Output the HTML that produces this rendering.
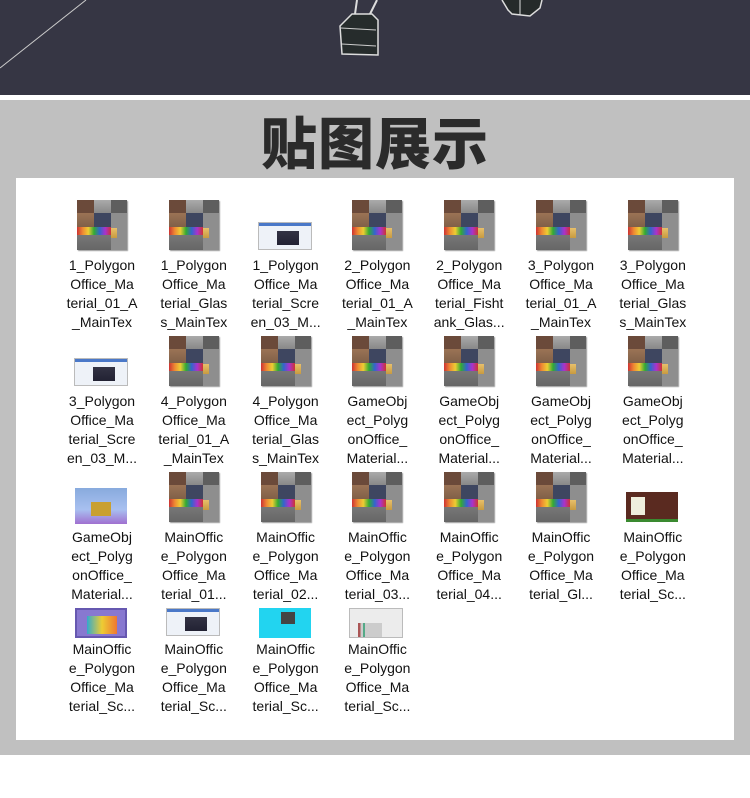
<!DOCTYPE html>
<html><head><meta charset="utf-8"><style>
*{margin:0;padding:0;box-sizing:border-box}
body{width:750px;height:798px;background:#fff;position:relative;overflow:hidden;font-family:"Liberation Sans","Noto Sans CJK SC",sans-serif}
#top{position:absolute;left:0;top:0;width:750px;height:95px;background:#363644}
#gray{position:absolute;left:0;top:100px;width:750px;height:655px;background:#c0c0c0}
h1{position:absolute;left:0;top:105px;width:750px;text-align:center;font-size:56px;font-weight:900;color:#2b2b2b;letter-spacing:1px;line-height:72px;font-family:"Noto Sans CJK SC",sans-serif}
#panel{position:absolute;left:16px;top:178px;width:718px;height:562px;background:#fff}
.it{position:absolute;width:80px;text-align:center;font-size:14px;line-height:19px;color:#111}
.th{position:absolute;left:15px;top:0;width:50px;height:50px}
.tx{background:
linear-gradient(#e8c06a,#c89a40) 34px 28px/6px 10px no-repeat,
linear-gradient(90deg,#c33,#e83,#ec3,#3a3,#36c,#a3c,#c33) 0 27px/34px 8px no-repeat,
linear-gradient(#777,#666) 0 35px/34px 15px no-repeat,
linear-gradient(#6b4a3a,#6b4a3a) 0 0/17px 13px no-repeat,
linear-gradient(#aaa,#888) 17px 0/17px 13px no-repeat,
linear-gradient(#9b7355,#806048) 0 13px/17px 14px no-repeat,
linear-gradient(#3e4660,#3e4660) 17px 13px/17px 14px no-repeat,
linear-gradient(#5e5e5e,#5e5e5e) 34px 0/16px 13px no-repeat,
#8e8e8e;box-shadow:1px 1px 1px #999}
.sc{top:22px;left:12px;width:54px;height:28px;background:
linear-gradient(#334,#223) 18px 8px/22px 14px no-repeat,
linear-gradient(#4a78c8,#4a78c8) 0 0/54px 3px no-repeat,#eef2f8;border:1px solid #bbb}
.tt{position:absolute;left:0;top:56px;width:80px}
</style></head><body>
<div id="top">
<svg width="750" height="95" style="position:absolute;left:0;top:0">
<line x1="0" y1="68" x2="86" y2="0" stroke="#ccc" stroke-width="1"/>
<path d="M357 0 L355 14 M377 0 L370 14" stroke="#ddd" stroke-width="2" fill="none"/>
<path d="M352 14 L372 14 L378 20 L378 55 L342 54 L340 26 Z" fill="#262c2c" stroke="#ddd" stroke-width="1.5"/>
<path d="M341 28 L376 30 M342 44 L376 46" stroke="#ccc"/>
<path d="M502 0 L508 10 L512 14 L530 16 L540 8 L542 0" fill="#252a2a" stroke="#ddd" stroke-width="1.5"/>
<path d="M520 0 L520 15" stroke="#ddd"/>
</svg>
</div>
<div id="gray"></div>
<h1>贴图展示</h1>
<div id="panel"></div>
<div id="items"></div>
<script>
var d=[
["tx","1_Polygon<br>Office_Ma<br>terial_01_A<br>_MainTex"],["tx","1_Polygon<br>Office_Ma<br>terial_Glas<br>s_MainTex"],["sc","1_Polygon<br>Office_Ma<br>terial_Scre<br>en_03_M..."],["tx","2_Polygon<br>Office_Ma<br>terial_01_A<br>_MainTex"],["tx","2_Polygon<br>Office_Ma<br>terial_Fisht<br>ank_Glas..."],["tx","3_Polygon<br>Office_Ma<br>terial_01_A<br>_MainTex"],["tx","3_Polygon<br>Office_Ma<br>terial_Glas<br>s_MainTex"],
["sc","3_Polygon<br>Office_Ma<br>terial_Scre<br>en_03_M..."],["tx","4_Polygon<br>Office_Ma<br>terial_01_A<br>_MainTex"],["tx","4_Polygon<br>Office_Ma<br>terial_Glas<br>s_MainTex"],["tx","GameObj<br>ect_Polyg<br>onOffice_<br>Material..."],["tx","GameObj<br>ect_Polyg<br>onOffice_<br>Material..."],["tx","GameObj<br>ect_Polyg<br>onOffice_<br>Material..."],["tx","GameObj<br>ect_Polyg<br>onOffice_<br>Material..."],
["g1","GameObj<br>ect_Polyg<br>onOffice_<br>Material..."],["tx","MainOffic<br>e_Polygon<br>Office_Ma<br>terial_01..."],["tx","MainOffic<br>e_Polygon<br>Office_Ma<br>terial_02..."],["tx","MainOffic<br>e_Polygon<br>Office_Ma<br>terial_03..."],["tx","MainOffic<br>e_Polygon<br>Office_Ma<br>terial_04..."],["tx","MainOffic<br>e_Polygon<br>Office_Ma<br>terial_Gl..."],["g2","MainOffic<br>e_Polygon<br>Office_Ma<br>terial_Sc..."],
["g3","MainOffic<br>e_Polygon<br>Office_Ma<br>terial_Sc..."],["sc4","MainOffic<br>e_Polygon<br>Office_Ma<br>terial_Sc..."],["g4","MainOffic<br>e_Polygon<br>Office_Ma<br>terial_Sc..."],["g5","MainOffic<br>e_Polygon<br>Office_Ma<br>terial_Sc..."]];
var ex={g1:"top:16px;left:13px;width:52px;height:36px;background:linear-gradient(#c9a030,#c9a030) 16px 14px/20px 14px no-repeat,linear-gradient(#8ad,#a8c0f0 60%,#a070d0);",
g2:"top:20px;left:13px;width:52px;height:30px;background:linear-gradient(#eed,#eed) 5px 5px/14px 18px no-repeat,linear-gradient(#3a8a30,#3a8a30) 0 27px/52px 3px no-repeat,#5a2a20;",
g3:"top:10px;left:13px;width:52px;height:30px;background:linear-gradient(90deg,#3ac,#ec3,#e73) 10px 6px/30px 18px no-repeat,#8878d0;border:2px solid #6658b0;",
sc4:"top:10px;left:12px;width:54px;height:28px;background:linear-gradient(#334,#223) 18px 8px/22px 14px no-repeat,linear-gradient(#4a78c8,#4a78c8) 0 0/54px 3px no-repeat,#eef2f8;border:1px solid #bbb;",
g4:"top:10px;left:13px;width:52px;height:30px;background:linear-gradient(#444,#444) 22px 4px/14px 12px no-repeat,#22d4f0;",
g5:"top:10px;left:12px;width:54px;height:30px;background:linear-gradient(90deg,#a55 10%,#ccc 10%,#ccc 20%,#5a8 20%,#5a8 30%,#ccc 30%) 8px 14px/24px 14px no-repeat,#ececec;border:1px solid #bbb;"};
var h="";
for(var i=0;i<d.length;i++){var c=i%7,r=Math.floor(i/7);var x=62+c*91.8,y=200+r*136;if(r==3)y-=10;
var cls=d[i][0],st="";if(ex[cls]){st=ex[cls];cls="";}
h+='<div class="it" style="left:'+x+'px;top:'+y+'px"><div class="th '+cls+'" style="'+st+'"></div><div class="tt"'+(r==3?' style="top:42px"':'')+'>'+d[i][1]+'</div></div>';}
document.getElementById("items").innerHTML=h;
</script>
</body></html>
